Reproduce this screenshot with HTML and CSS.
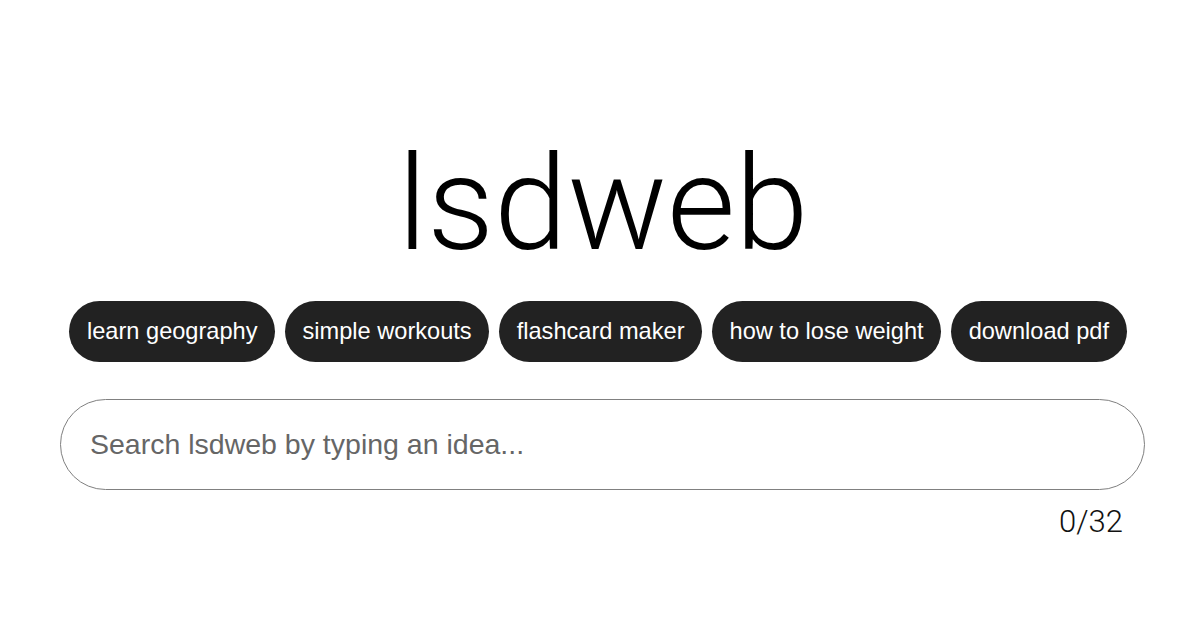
FILE: index.html
```html
<!DOCTYPE html>
<html>
<head>
<meta charset="utf-8">
<link rel="stylesheet" href="styles.css">
</head>
<body>
<main class="page">
  <h1 class="title">lsdweb</h1>
  <div class="chips">
    <span class="chip">learn geography</span>
    <span class="chip">simple workouts</span>
    <span class="chip">flashcard maker</span>
    <span class="chip">how to lose weight</span>
    <span class="chip">download pdf</span>
  </div>
  <div class="search">
    <span class="placeholder">Search lsdweb by typing an idea...</span>
  </div>
  <div class="counter">0/32</div>
</main>
</body>
</html>
```
FILE: styles.css
```css
html, body {
  margin: 0;
  padding: 0;
  background: #fff;
}
.page {
  width: 1200px;
  height: 630px;
  display: flex;
  flex-direction: column;
  align-items: center;
  box-sizing: border-box;
  padding-top: 124px;
}
.title {
  margin: 0;
  font-family: Roboto, sans-serif;
  font-weight: 300;
  font-size: 132px;
  line-height: 160px;
  color: #000;
  margin-left: 6px;
}
.chips {
  display: flex;
  gap: 10px;
  margin-top: 17px;
  margin-left: -4px;
}
.chip {
  background: #222;
  color: #fff;
  font-family: "Liberation Sans", Arial, sans-serif;
  font-size: 23.6px;
  height: 61px;
  line-height: 61px;
  padding: 0 17.5px;
  border-radius: 31px;
  white-space: nowrap;
}
.search {
  margin-top: 37px;
  width: 1085px;
  height: 91px;
  box-sizing: border-box;
  border: 1.5px solid #808080;
  border-radius: 46px;
  display: flex;
  align-items: center;
  padding-left: 29px;
  margin-left: 5px;
}
.placeholder {
  font-family: "Liberation Sans", Arial, sans-serif;
  font-size: 28.5px;
  color: #666;
}
.counter {
  align-self: flex-end;
  margin-right: 77px;
  margin-top: 13px;
  font-family: Roboto, sans-serif;
  font-weight: 300;
  font-size: 31px;
  color: #111;
}
```
